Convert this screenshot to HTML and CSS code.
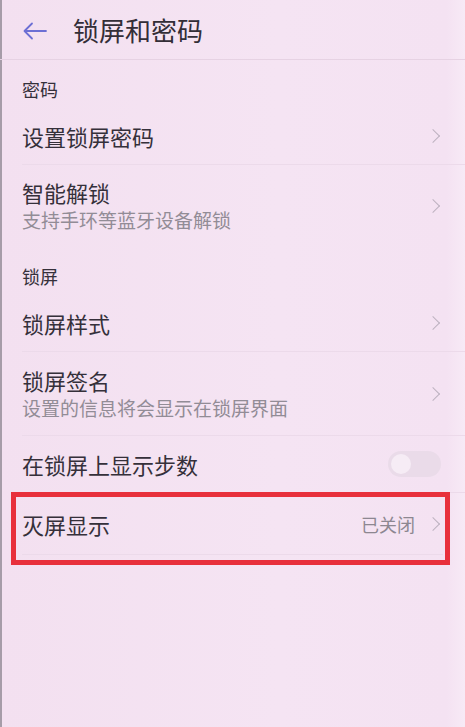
FILE: index.html
```html
<!DOCTYPE html>
<html lang="zh-CN">
<head>
<meta charset="utf-8">
<title>锁屏和密码</title>
<link rel="stylesheet" href="styles.css">
</head>
<body>
<div class="screen">
  <header class="topbar">
    <svg class="back" width="24" height="18" viewBox="0 0 24 18">
      <path d="M23 9H2M9 1.5L1.5 9L9 16.5" fill="none" stroke="#6c6fd4" stroke-width="1.8" stroke-linecap="round" stroke-linejoin="round"/>
    </svg>
    <h1 class="title">锁屏和密码</h1>
  </header>

  <div class="section">密码</div>
  <div class="item">
    <div class="texts"><div class="label">设置锁屏密码</div></div>
    <span class="chev"></span>
  </div>
  <div class="item two first-two">
    <div class="texts">
      <div class="label">智能解锁</div>
      <div class="sub">支持手环等蓝牙设备解锁</div>
    </div>
    <span class="chev"></span>
  </div>

  <div class="section">锁屏</div>
  <div class="item">
    <div class="texts"><div class="label">锁屏样式</div></div>
    <span class="chev"></span>
  </div>
  <div class="item two">
    <div class="texts">
      <div class="label">锁屏签名</div>
      <div class="sub">设置的信息将会显示在锁屏界面</div>
    </div>
    <span class="chev"></span>
  </div>
  <div class="item">
    <div class="texts"><div class="label">在锁屏上显示步数</div></div>
    <span class="toggle"><span class="knob"></span></span>
  </div>
  <div class="item tall">
    <div class="texts"><div class="label">灭屏显示</div></div>
    <span class="value">已关闭</span>
    <span class="chev"></span>
  </div>

  <div class="highlight"></div>
</div>
</body>
</html>
```

FILE: styles.css
```css
html, body {
  margin: 0;
  padding: 0;
}
body {
  background: #f4e3f2;
  font-family: "Noto Sans CJK SC", "Noto Sans", sans-serif;
  color: #35303a;
}
.screen {
  position: relative;
  width: 465px;
  height: 727px;
  overflow: hidden;
  background: linear-gradient(90deg, #f3e0f0 0%, #f5e4f3 60%, #f4e2f2 96%, #f7eaf6 100%);
  box-shadow: inset 2px 0 0 #a69ca8;
}
.topbar {
  height: 60px;
  display: flex;
  align-items: center;
  padding-left: 23px;
  border-bottom: 1px solid #e6d2e3;
  box-sizing: border-box;
}
.back {
  display: block;
  margin-top: 2px;
}
.title {
  margin: 0 0 0 26px;
  font-size: 26px;
  font-weight: 400;
  line-height: 32px;
  color: #332e37;
}
.section {
  height: 48px;
  box-sizing: border-box;
  padding: 17px 0 0 22px;
  font-size: 18px;
  line-height: 24px;
  color: #35303a;
}
.item {
  height: 57px;
  margin-left: 22px;
  padding-right: 25px;
  display: flex;
  align-items: center;
  box-sizing: border-box;
  border-bottom: 1px solid #ecdaea;
}
.item.two {
  height: 84px;
}
.item.first-two {
  height: 82px;
  border-bottom: none;
}
.item.tall {
  height: 62px;
  margin-right: 22px;
  padding-right: 3px;
}
.texts {
  flex: 1;
}
.label {
  font-size: 22px;
  line-height: 28px;
  color: #35303a;
}
.sub {
  font-size: 19px;
  line-height: 28px;
  color: #928c96;
}
.chev {
  width: 9px;
  height: 9px;
  border-top: 1.6px solid #bdb2c0;
  border-right: 1.6px solid #bdb2c0;
  transform: rotate(45deg);
  margin-right: 2px;
}
.value {
  font-size: 18px;
  color: #8d8791;
  margin-right: 13px;
}
.toggle {
  width: 53px;
  height: 26px;
  border-radius: 13px;
  background: #eadbe9;
  display: flex;
  align-items: center;
  padding-left: 3px;
  box-sizing: border-box;
  margin-right: -1px;
}
.knob {
  width: 20px;
  height: 20px;
  border-radius: 50%;
  background: #f6ecf5;
}
.highlight {
  position: absolute;
  left: 11px;
  top: 492px;
  width: 439px;
  height: 73px;
  border: 5px solid #e8303c;
  box-sizing: border-box;
}
```
